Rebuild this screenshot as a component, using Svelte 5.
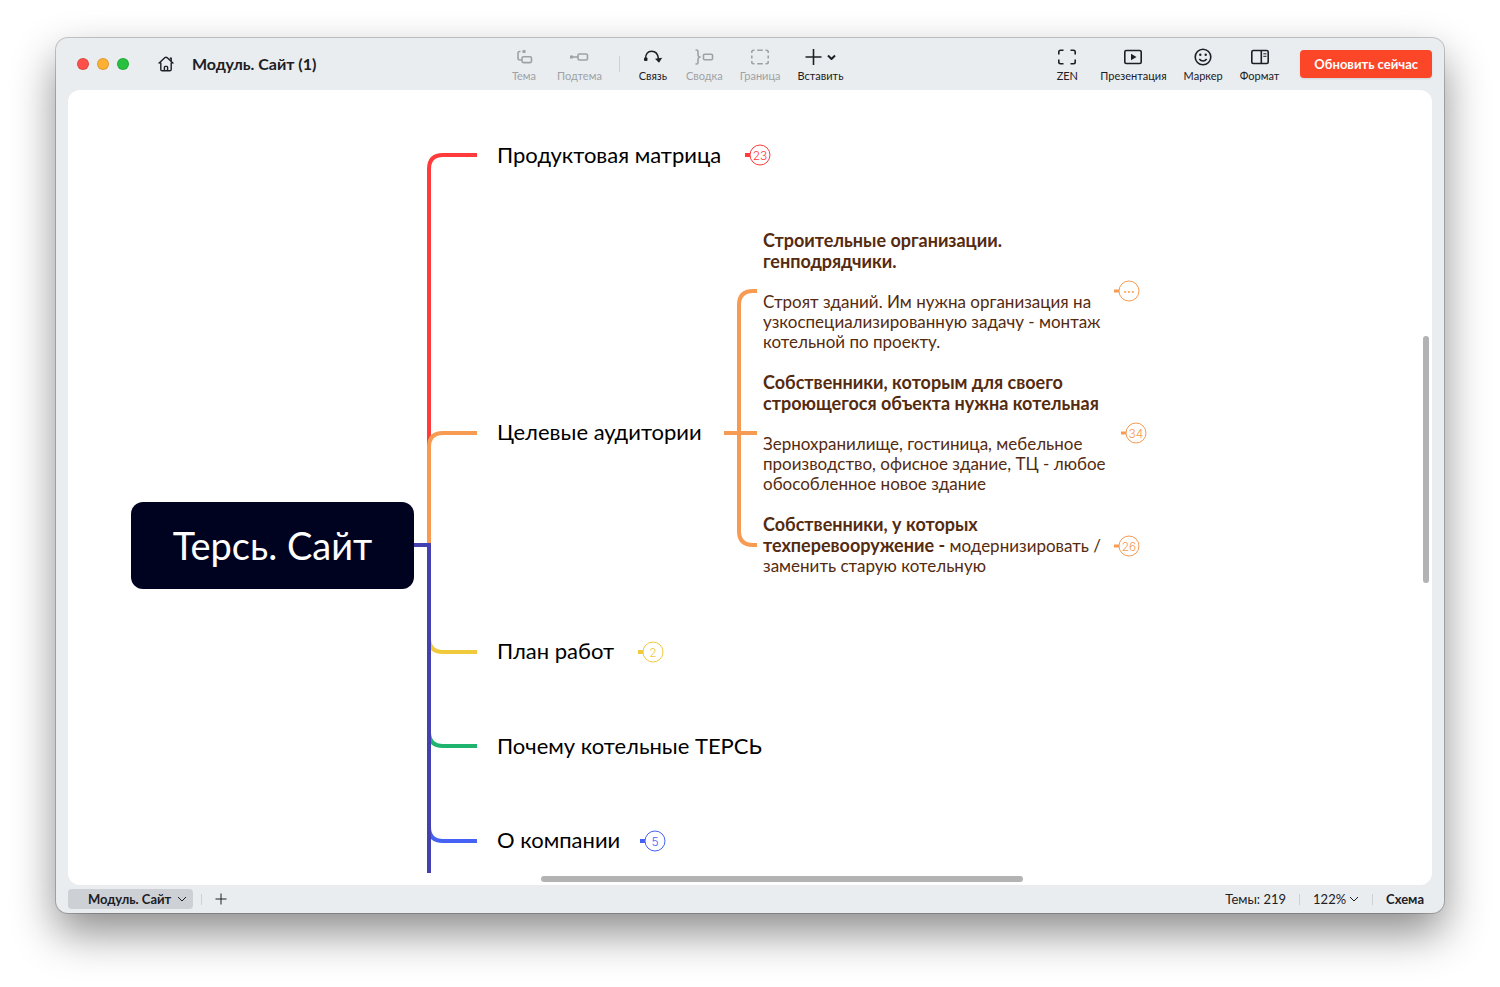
<script lang="ts">
  type Tool = { icon: string; label: string; disabled?: boolean };

  const editTools: Tool[] = [
    { icon: 'topic', label: 'Тема', disabled: true },
    { icon: 'subtopic', label: 'Подтема', disabled: true },
  ];

  const insertTools: Tool[] = [
    { icon: 'relation', label: 'Связь' },
    { icon: 'summary', label: 'Сводка', disabled: true },
    { icon: 'boundary', label: 'Граница', disabled: true },
    { icon: 'insert', label: 'Вставить' },
  ];

  const viewTools: Tool[] = [
    { icon: 'zen', label: 'ZEN' },
    { icon: 'pitch', label: 'Презентация' },
    { icon: 'marker', label: 'Маркер' },
    { icon: 'format', label: 'Формат' },
  ];

  // main branches, y is the middle of the topic
  const topics = [
    { title: 'Продуктовая матрица', y: 65 },
    { title: 'Целевые аудитории', y: 342 },
    { title: 'План работ', y: 561 },
    { title: 'Почему котельные ТЕРСЬ', y: 656 },
    { title: 'О компании', y: 750 },
  ];

  // collapsed children counters
  const counters = [
    { text: '23', x: 692, y: 65, color: '#ff3b3b', stub: 4 },
    { text: '···', x: 1061, y: 201, color: '#f79a52', stub: 3 },
    { text: '34', x: 1068, y: 343, color: '#f79a52', stub: 3 },
    { text: '26', x: 1061, y: 456, color: '#f79a52', stub: 3 },
    { text: '2', x: 585, y: 562, color: '#f0ca3a', stub: 4 },
    { text: '5', x: 587, y: 751, color: '#4562f5', stub: 4 },
  ];

  let zoom = $state('122%');
</script>

{#snippet glyph(name: string)}
  <svg class="icon" class:wide={name === 'insert'} viewBox={name === 'insert' ? '0 0 32 20' : '0 0 24 20'} aria-hidden="true">
    {#if name === 'topic'}
      <path d="M8.5 4.5H7.5Q6 4.5 6 6V11Q6 13 8 13H10" />
      <rect x="10" y="9.8" width="9.5" height="5.8" rx="1.5" />
      <rect class="solid" x="10.5" y="3" width="3" height="3" />
    {:else if name === 'subtopic'}
      <rect class="solid" x="3" y="8.5" width="3" height="3" />
      <path d="M6 10H11" />
      <rect x="11" y="7" width="9.5" height="6" rx="1.5" />
    {:else if name === 'relation'}
      <path d="M4.5 12C4.5 7 7 4.3 10.5 4.3C14.5 4.3 17 7 17.5 12" />
      <rect class="solid" x="3" y="10.5" width="3.5" height="3.5" rx="1" />
      <path class="solid" d="M14 11.8L21.2 10.8L18 15.8Z" />
    {:else if name === 'summary'}
      <path d="M3.5 3H4.5Q6 3 6 4.5V8Q6 9.5 8 10Q6 10.5 6 12V15.5Q6 17 4.5 17H3.5" />
      <rect x="11.5" y="7.3" width="9" height="5.4" rx="1" />
    {:else if name === 'boundary'}
      <path d="M3.8 6V5Q3.8 3.3 5.5 3.3H6.5M9.2 3.3H14.8M17.5 3.3H18.5Q20.2 3.3 20.2 5V6M20.2 8.5V11.5M20.2 14V15Q20.2 16.7 18.5 16.7H17.5M14.8 16.7H9.2M6.5 16.7H5.5Q3.8 16.7 3.8 15V14M3.8 11.5V8.5" />
    {:else if name === 'insert'}
      <path d="M0.5 10H16.5M8.5 2V18" />
      <path class="bold" d="M23 8.5L26.5 12L30 8.5" />
    {:else if name === 'zen'}
      <path d="M3.8 7.5V5Q3.8 3.3 5.5 3.3H8.5M15.5 3.3H18.5Q20.2 3.3 20.2 5V7.5M20.2 12.5V15Q20.2 16.7 18.5 16.7H15.5M8.5 16.7H5.5Q3.8 16.7 3.8 15V12.5" />
    {:else if name === 'pitch'}
      <rect x="3.8" y="3.5" width="16.4" height="13" rx="1.5" />
      <path class="solid" d="M10 6.8L15.5 10L10 13.2Z" />
    {:else if name === 'marker'}
      <circle cx="12" cy="10" r="7.8" />
      <path d="M8.3 12Q9.8 14 12 14T15.7 12" />
      <circle class="solid" cx="9.3" cy="7.8" r="1.2" />
      <circle class="solid" cx="14.7" cy="7.8" r="1.2" />
    {:else if name === 'format'}
      <rect x="3.8" y="3.5" width="16.4" height="13" rx="1.5" />
      <path d="M13.3 3.5V16.5" />
      <path class="thin" d="M15.3 6.8H18.5M15.3 9.3H18.5" />
    {/if}
  </svg>
{/snippet}

{#snippet toolButton(tool: Tool)}
  <button class="tool" disabled={tool.disabled}>
    {@render glyph(tool.icon)}
    <span>{tool.label}</span>
  </button>
{/snippet}

<main class="desktop">
  <div class="window">
    <header class="toolbar">
      <div class="lead">
        <div class="lights">
          <button class="light close" aria-label="Закрыть"></button>
          <button class="light minimize" aria-label="Свернуть"></button>
          <button class="light expand" aria-label="Развернуть"></button>
        </div>
        <button class="home" aria-label="Домой">
          <svg viewBox="0 0 16 16" aria-hidden="true">
            <path d="M0.6 7.4L7 1.6Q8 0.8 9 1.6L15.4 7.4M13.2 5V2.2H11.8M2.8 6.5V13.4Q2.8 14.8 4.2 14.8H11.8Q13.2 14.8 13.2 13.4V6.5M6.4 14.5V11.2Q6.4 10.4 7.2 10.4H8.8Q9.6 10.4 9.6 11.2V14.5" />
          </svg>
        </button>
        <h1>Модуль. Сайт (1)</h1>
      </div>
      <div class="tools">
        {#each editTools as tool}
          {@render toolButton(tool)}
        {/each}
        <span class="separator"></span>
        {#each insertTools as tool}
          {@render toolButton(tool)}
        {/each}
      </div>
      <div class="tools view">
        {#each viewTools as tool}
          {@render toolButton(tool)}
        {/each}
        <button class="update">Обновить сейчас</button>
      </div>
    </header>

    <section class="canvas">
      <svg class="links" aria-hidden="true">
        <path stroke="#ff3b3b" d="M361 455V79Q361 65 375 65H409" />
        <path stroke="#f79a52" d="M361 455V357Q361 343 375 343H409" />
        <path stroke="#f0ca3a" d="M361 455V548Q361 562 375 562H409" />
        <path stroke="#1eb46e" d="M361 455V642Q361 656 375 656H409" />
        <path stroke="#4562f5" d="M361 455V737Q361 751 375 751H409" />
        <path stroke="#4540b0" d="M346 455H361V783" />
        <path stroke="#f79a52" d="M656 343H689M689 201H685Q671 201 671 215V441Q671 455 685 455H689" />
        {#each counters as c}
          <path stroke={c.color} stroke-width={c.stub} d="M{c.x - 15} {c.y}H{c.x - 10}" />
        {/each}
      </svg>

      <div class="root">Терсь. Сайт</div>

      {#each topics as topic}
        <div class="topic" style="top: {topic.y}px">{topic.title}</div>
      {/each}

      <div class="subtopic" style="top: 201px">
        <strong>Строительные организации.<br />генподрядчики.</strong>
        <p class="spaced">Строят зданий. Им нужна организация на<br />узкоспециализированную задачу - монтаж<br />котельной по проекту.</p>
      </div>
      <div class="subtopic" style="top: 343px">
        <strong>Собственники, которым для своего<br />строющегося объекта нужна котельная</strong>
        <p class="spaced">Зернохранилище, гостиница, мебельное<br />производство, офисное здание, ТЦ - любое<br />обособленное новое здание</p>
      </div>
      <div class="subtopic" style="top: 455px">
        <strong>Собственники, у которых</strong>
        <p><b>техперевооружение -</b> модернизировать /<br />заменить старую котельную</p>
      </div>

      {#each counters as c}
        <button class="counter" class:more={c.text === '···'} style="left: {c.x}px; top: {c.y}px; color: {c.color}">{c.text}</button>
      {/each}

      <div class="scrollbar vertical"></div>
      <div class="scrollbar horizontal"></div>
    </section>

    <footer class="statusbar">
      <button class="sheet">
        Модуль. Сайт
        <svg class="chevron" viewBox="0 0 10 6" aria-hidden="true"><path d="M1 1L5 5L9 1" /></svg>
      </button>
      <span class="divider"></span>
      <button class="add" aria-label="Добавить лист">
        <svg viewBox="0 0 12 12" aria-hidden="true"><path d="M6 0.5V11.5M0.5 6H11.5" /></svg>
      </button>
      <div class="status">
        <span>Темы: 219</span>
        <span class="divider"></span>
        <label class="zoom">
          <select bind:value={zoom} aria-label="Масштаб">
            <option>122%</option>
          </select>
          <svg class="chevron" viewBox="0 0 10 6" aria-hidden="true"><path d="M1 1L5 5L9 1" /></svg>
        </label>
        <span class="divider"></span>
        <button class="outline">Схема</button>
      </div>
    </footer>
  </div>
</main>

<style>
  :global(body) {
    background: #fff;
  }

  .desktop {
    box-sizing: border-box;
    display: flex;
    min-height: 100vh;
    padding: 38px 56px 74px;
    font-family: Lato, 'Liberation Sans', sans-serif;
    color: #1c2024;
  }

  button,
  select {
    margin: 0;
    padding: 0;
    border: 0;
    background: none;
    font: inherit;
    color: inherit;
  }

  svg {
    display: block;
    fill: none;
    stroke: currentColor;
  }

  .window {
    flex: 1;
    min-width: 0;
    display: flex;
    flex-direction: column;
    border-radius: 12px;
    background: #e9edf0;
    box-shadow:
      0 0 0 1px rgba(0, 0, 0, 0.2),
      0 20px 44px rgba(0, 0, 0, 0.45);
  }

  .toolbar {
    display: flex;
    align-items: center;
    height: 52px;
    padding-right: 12px;
  }

  .lead {
    box-sizing: border-box;
    display: flex;
    align-items: center;
    width: 452px;
    padding-left: 21px;
  }

  .lights {
    display: flex;
    gap: 8px;
  }

  .light {
    width: 12px;
    height: 12px;
    border: 1px solid rgba(0, 0, 0, 0.12);
    border-radius: 50%;
  }

  .close {
    background: #fe5049;
  }

  .minimize {
    background: #fdb034;
  }

  .expand {
    background: #27c03f;
  }

  .home {
    margin: 0 18px 0 29px;
  }

  .home svg {
    width: 16px;
    height: 16px;
    stroke-width: 1.4;
  }

  h1 {
    margin: 0;
    font-size: 16px;
    font-weight: 700;
    line-height: 20px;
    white-space: nowrap;
  }

  .tools {
    display: flex;
    align-items: center;
    gap: 17px;
  }

  .tools.view {
    margin-left: auto;
  }

  .tool {
    display: flex;
    flex-direction: column;
    align-items: center;
    gap: 2px;
    min-width: 32px;
    padding-top: 1px;
    font-size: 11px;
    line-height: 14px;
  }

  .tool:disabled {
    color: #9ea2a5;
  }

  .icon {
    width: 24px;
    height: 20px;
    stroke-width: 1.6;
    stroke-linejoin: round;
  }

  .icon.wide {
    width: 32px;
  }

  .bold {
    stroke-width: 2;
  }

  .solid {
    fill: currentColor;
    stroke: none;
  }

  .thin {
    stroke-width: 1;
  }

  .separator {
    width: 1px;
    height: 16px;
    background: #cdd1d4;
  }

  .update {
    height: 28px;
    margin-left: 4px;
    padding: 0 14px;
    border-radius: 4px;
    background: #fb4628;
    color: #fff;
    font-size: 13px;
    font-weight: 700;
    box-shadow: 0 1px 2px rgba(0, 0, 0, 0.1);
    white-space: nowrap;
  }

  .canvas {
    position: relative;
    flex: 1;
    margin: 0 12px;
    border-radius: 12px;
    background: #fff;
    overflow: hidden;
  }

  .links {
    position: absolute;
    inset: 0;
    width: 100%;
    height: 100%;
    stroke-width: 4;
  }

  .root {
    position: absolute;
    left: 63px;
    top: 412px;
    width: 283px;
    border-radius: 12px;
    background: #000320;
    color: #fff;
    font-size: 38px;
    line-height: 87px;
    text-align: center;
  }

  .topic {
    position: absolute;
    left: 429px;
    transform: translateY(-50%);
    color: #000;
    font-size: 22px;
    line-height: 28px;
    white-space: nowrap;
  }

  .subtopic {
    position: absolute;
    left: 695px;
    transform: translateY(-50%);
    color: #552b10;
    font-size: 17px;
    line-height: 20px;
    white-space: nowrap;
  }

  .subtopic strong {
    display: block;
    font-size: 18px;
    line-height: 21px;
  }

  .subtopic b {
    font-size: 18px;
    line-height: 20px;
  }

  .subtopic p {
    margin: 0;
  }

  .subtopic .spaced {
    margin-top: 20px;
  }

  .counter {
    position: absolute;
    width: 21px;
    height: 21px;
    border: 1px solid currentColor;
    border-radius: 50%;
    transform: translate(-50%, -50%);
    font-family: Inter, 'Liberation Sans', sans-serif;
    font-size: 12px;
    font-weight: 300;
    line-height: 19px;
    text-align: center;
  }

  .counter.more {
    font-weight: 600;
  }

  .scrollbar {
    position: absolute;
    border-radius: 3px;
    background: #b3b3b3;
  }

  .vertical {
    top: 31%;
    right: 3px;
    width: 6px;
    height: 31%;
  }

  .horizontal {
    left: 34.7%;
    bottom: 3px;
    width: 35.3%;
    height: 6px;
  }

  .statusbar {
    display: flex;
    align-items: center;
    height: 28px;
    padding: 0 12px;
    font-size: 13px;
    line-height: 20px;
  }

  .chevron {
    width: 10px;
    height: 6px;
  }

  .sheet {
    display: flex;
    align-items: center;
    gap: 6px;
    height: 20px;
    padding: 0 6px 0 20px;
    border-radius: 4px;
    background: #cdd1d6;
    font-weight: 700;
    white-space: nowrap;
  }

  .divider {
    width: 1px;
    height: 11px;
    margin: 0 13px;
    background: #cdd1d4;
  }

  .sheet + .divider {
    margin-left: 8px;
  }

  .add svg {
    width: 12px;
    height: 12px;
  }

  .status {
    display: flex;
    align-items: center;
    margin-left: auto;
    padding-right: 8px;
  }

  .zoom {
    display: flex;
    align-items: center;
    gap: 2px;
  }

  .zoom select {
    appearance: none;
  }

  .outline {
    font-weight: 700;
  }
</style>
